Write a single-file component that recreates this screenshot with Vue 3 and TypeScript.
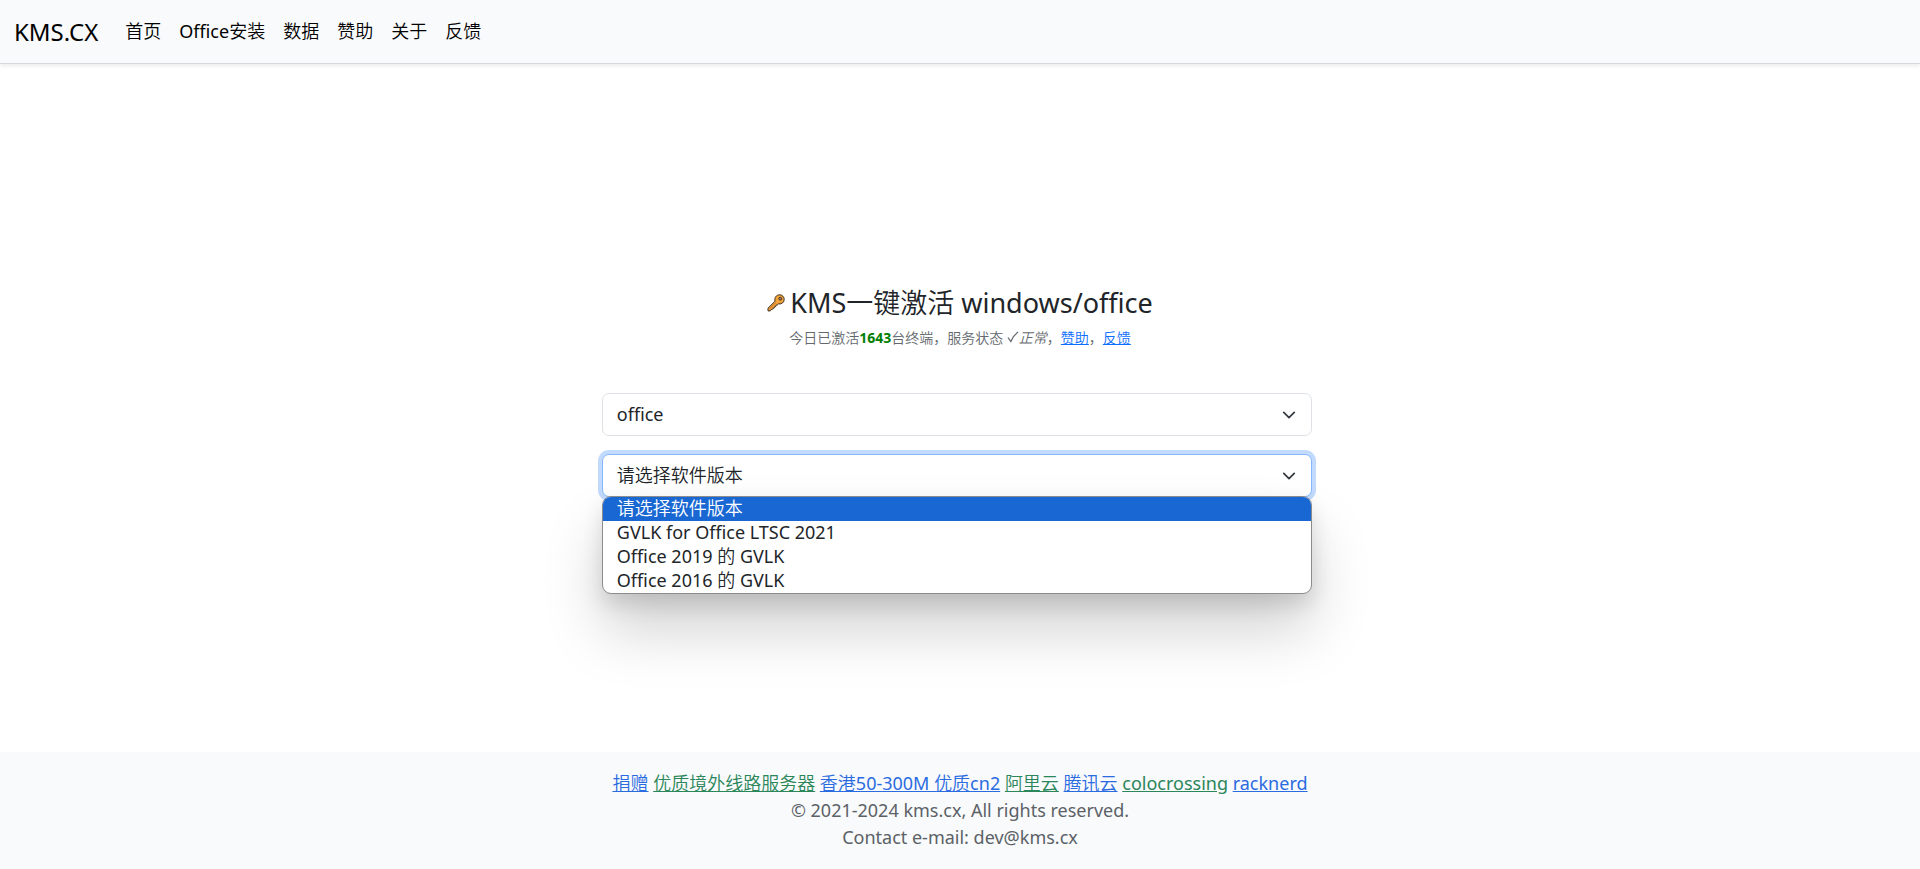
<script setup lang="ts">
import { ref } from 'vue'

interface FooterLink { label: string; tone: 'blue' | 'green' }

const navLinks: string[] = ['首页', 'Office安装', '数据', '赞助', '关于', '反馈']

const footerLinks: FooterLink[] = [
  { label: '捐赠', tone: 'blue' },
  { label: '优质境外线路服务器', tone: 'green' },
  { label: '香港50-300M 优质cn2', tone: 'blue' },
  { label: '阿里云', tone: 'green' },
  { label: '腾讯云', tone: 'blue' },
  { label: 'colocrossing', tone: 'green' },
  { label: 'racknerd', tone: 'blue' },
]

const versions: string[] = [
  '请选择软件版本',
  'GVLK for Office LTSC 2021',
  'Office 2019 的 GVLK',
  'Office 2016 的 GVLK',
]

const product = ref('office')
const version = ref(versions[0])
const menuOpen = ref(true)

function choose(value: string) {
  version.value = value
  menuOpen.value = false
}
</script>

<template>
  <div class="page">
    <nav class="navbar">
      <a class="brand" href="#">KMS.CX</a>
      <a v-for="link in navLinks" :key="link" href="#">{{ link }}</a>
    </nav>

    <main class="main">
      <h1 class="title">
        <svg class="key" viewBox="0 0 18 18" aria-hidden="true">
          <path d="M8 7.200C7.200 3.600 9.400.8 12.500.8c2.700 0 4.700 2 4.700 4.600 0 3-2.600 5-5.800 4.500L10.200 11 9.100 11.100 9 12.200 7.800 12.400 7.600 13.700 6.300 13.800 6.100 15 4.800 15.100 3.300 16.900H1V14.200Z" fill="#f2a33a" stroke="#3c2f25" stroke-width="1" stroke-linejoin="round" />
          <path d="M2.300 15 8.800 8.500" stroke="#b56a1f" stroke-width=".8" fill="none" />
          <circle cx="13.300" cy="4.700" r="1.400" fill="#b9846a" stroke="#3c2f25" stroke-width="1" />
        </svg>
        <span>KMS一键激活 windows/office</span>
      </h1>
      <p class="status">
        今日已激活<b class="count">1643</b>台终端，服务状态
        <svg class="check" viewBox="0 0 12 12" aria-hidden="true"><path d="M1 6.500 3.800 10.500Q6 5 11 1" fill="none" stroke="currentColor" stroke-width="1.300" /></svg><i>正常</i>，<a href="#">赞助</a>，<a href="#">反馈</a>
      </p>

      <form class="form" @submit.prevent>
        <div class="field">
          <select v-model="product" class="select" aria-label="软件">
            <option value="office">office</option>
          </select>
          <svg class="chevron" viewBox="0 0 16 16" aria-hidden="true"><path d="m2 5 6 6 6-6" /></svg>
        </div>
        <div class="field">
          <select v-model="version" class="select focused" aria-label="软件版本">
            <option v-for="v in versions" :key="v" :value="v">{{ v }}</option>
          </select>
          <svg class="chevron" viewBox="0 0 16 16" aria-hidden="true"><path d="m2 5 6 6 6-6" /></svg>
          <ul v-if="menuOpen" class="menu" role="listbox" aria-label="软件版本">
            <li
              v-for="v in versions"
              :key="v"
              class="item"
              :class="{ active: v === version }"
              role="option"
              :aria-selected="v === version"
              @click="choose(v)"
            >{{ v }}</li>
          </ul>
        </div>
      </form>
    </main>

    <footer class="footer">
      <div>
        <template v-for="link in footerLinks" :key="link.label">
          <a href="#" :class="link.tone">{{ link.label }}</a>{{ ' ' }}
        </template>
      </div>
      <div>© 2021-2024 kms.cx, All rights reserved.</div>
      <div>Contact e-mail: dev@kms.cx</div>
    </footer>
  </div>
</template>

<style>
body {
  margin: 0;
  background: #fff;
}
</style>

<style scoped>
.page {
  display: flex;
  flex-direction: column;
  min-height: 100vh;
  color: #212529;
  font-family: "Noto Sans", "Noto Sans CJK SC DemiLight", "Noto Sans CJK SC", sans-serif;
  font-size: 18px;
  line-height: 27px;
}
.navbar {
  display: flex;
  align-items: center;
  gap: 18px;
  height: 63px;
  padding: 0 14px;
  background: #f8fafc;
  border-bottom: 1px solid #d5d7da;
  box-shadow: 0 2px 4px rgba(0, 0, 0, 0.08);
}
.navbar a {
  color: #000;
  text-decoration: none;
}
.navbar .brand {
  margin-right: 9px;
  font-size: 24px;
}
.main {
  flex: 1;
  padding-top: 220px;
}
.title {
  display: flex;
  align-items: center;
  justify-content: center;
  gap: 5px;
  margin: 0;
  font-size: 27px;
  font-weight: 400;
  line-height: 38px;
}
.key {
  width: 18px;
  height: 18px;
}
.status {
  margin: 5px 0 0;
  color: #63686d;
  font-size: 14px;
  line-height: 22px;
  text-align: center;
}
.status a {
  color: #0d6efd;
}
.count {
  color: #008000;
  font-weight: 700;
}
.check {
  width: 12px;
  height: 12px;
}
.form {
  display: flex;
  flex-direction: column;
  gap: 18px;
  width: 37%;
  max-width: 100%;
  margin: 44px auto 0;
  padding-right: 6px;
}
.field {
  position: relative;
}
.select {
  display: block;
  width: 100%;
  height: 43px;
  margin: 0;
  padding: 0 40px 2px 14px;
  color: #212529;
  background: #fff;
  border: 1px solid #dee2e6;
  border-radius: 7px;
  outline: 0;
  appearance: none;
  font-family: inherit;
  font-size: 18px;
}
.select.focused {
  border-color: #86b7fe;
  box-shadow: 0 0 0 4px #c2dafe;
}
.chevron {
  position: absolute;
  top: 15px;
  right: 16px;
  width: 14px;
  height: 14px;
  fill: none;
  stroke: #343a40;
  stroke-width: 2;
  stroke-linecap: round;
  stroke-linejoin: round;
  pointer-events: none;
}
.menu {
  position: absolute;
  top: 42px;
  left: 0;
  right: 0;
  margin: 0;
  padding: 0;
  overflow: hidden;
  list-style: none;
  background: #fff;
  border: 1px solid #8c8c8c;
  border-radius: 9px;
  box-shadow: 0 10px 20px rgba(0, 0, 0, 0.12), 0 36px 60px rgba(0, 0, 0, 0.18);
}
.item {
  height: 24px;
  padding: 0 14px;
  line-height: 22px;
}
.item.active {
  color: #fff;
  background: #1967d2;
}
.footer {
  padding: 18px;
  color: #5c6166;
  background: #f8fafc;
  text-align: center;
}
.blue {
  color: #2b6be0;
}
.green {
  color: #2b8659;
}
</style>
